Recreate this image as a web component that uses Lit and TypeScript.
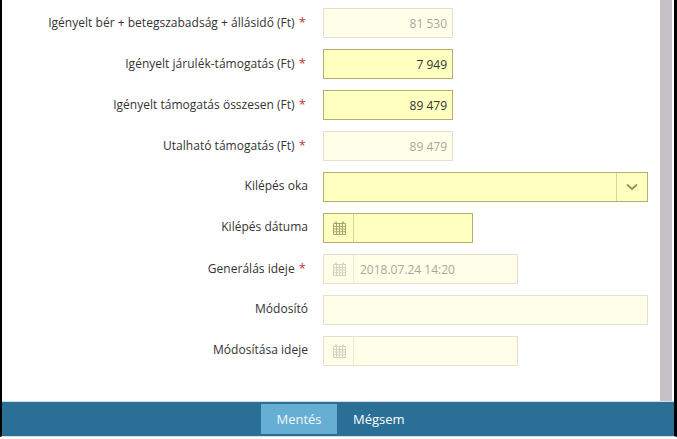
import { LitElement, html, css } from "lit";
import { customElement } from "lit/decorators.js";

const calendar = html`<svg class="cal" viewBox="0 0 13 14" width="13" height="14" aria-hidden="true">
  <path d="M.5 2.5h12v11H.5zM.5 5.5h12M.5 8h12M.5 10.75h12M3.5 2.5v11M6.5 2.5v11M9.5 2.5v11" fill="none" stroke="currentColor" stroke-width="1"/>
  <path d="M3 .5v2M10 .5v2" fill="none" stroke="currentColor" stroke-width="1.6"/>
</svg>`;

type Row = { label: string; req?: boolean; kind: "num" | "select" | "date" | "text"; value?: string; on?: boolean; w?: string };

const rows: Row[] = [
  { label: "Igényelt bér + betegszabadság + állásidő (Ft)", req: true, kind: "num", value: "81 530" },
  { label: "Igényelt járulék-támogatás (Ft)", req: true, kind: "num", value: "7 949", on: true },
  { label: "Igényelt támogatás összesen (Ft)", req: true, kind: "num", value: "89 479", on: true },
  { label: "Utalható támogatás (Ft)", req: true, kind: "num", value: "89 479" },
  { label: "Kilépés oka", kind: "select", on: true },
  { label: "Kilépés dátuma", kind: "date", on: true, w: "short" },
  { label: "Generálás ideje", req: true, kind: "date", value: "2018.07.24 14:20", w: "long" },
  { label: "Módosító", kind: "text" },
  { label: "Módosítása ideje", kind: "date", w: "long" },
];

@customElement("app-root")
export class AppRoot extends LitElement {
  static styles = css`
    :host {
      display: block;
      width: 677px;
      height: 439px;
      overflow: hidden;
      background: #fff;
      font-family: "Open Sans", sans-serif;
      font-size: 12px;
      color: #333;
    }
    .window {
      height: 437px;
      display: flex;
      flex-direction: column;
      border-left: 2px solid #000;
      border-right: 3px solid #000;
      border-bottom: 1px solid #d3dfe6;
      box-sizing: border-box;
      background: #fff;
    }
    .body {
      flex: 1;
      min-height: 0;
      display: flex;
      border-bottom: 1px solid #d3dfe6;
    }
    .form {
      flex: 1;
      padding-top: 8px;
      display: flex;
      flex-direction: column;
      gap: 11px;
    }
    .row {
      display: flex;
      height: 30px;
      gap: 15px;
    }
    .label {
      width: 306px;
      text-align: right;
      line-height: 30px;
      height: 30px;
      margin-top: -1px;
      white-space: nowrap;
      letter-spacing: 0.02px;
    }
    .req { color: #c0393b; font-size: 13px; margin-left: 1px; margin-right: 2px; }
    .field {
      box-sizing: border-box;
      height: 30px;
      display: flex;
      align-items: center;
      border: 1px solid #e3e0cc;
      background: #fffee8;
      color: #a9a99b;
    }
    .field.on {
      border-color: #b5ae72;
      background: #ffffc0;
      color: #333;
    }
    .num { width: 130px; justify-content: flex-end; padding-right: 5px; }
    .wide { width: 325px; }
    .short { width: 150px; }
    .long { width: 195px; }
    .addon {
      box-sizing: border-box;
      width: 30px;
      height: 28px;
      flex: none;
      display: flex;
      align-items: center;
      justify-content: center;
      padding-left: 1px;
      border-right: 1px solid #eeeccf;
      color: #d4d3bd;
    }
    .on .addon { border-right-color: #d8d49b; color: #a8a373; }
    .date-value { padding-left: 6px; }
    .fill { flex: 1; }
    .chevron {
      box-sizing: border-box;
      width: 31px;
      height: 28px;
      flex: none;
      display: flex;
      align-items: center;
      justify-content: center;
      border-left: 1px solid #d8d49b;
      color: #97915c;
    }
    .scroll {
      width: 12px;
      margin-right: 2px;
      background: #c4c2c6;
      flex: none;
    }
    .footer {
      flex: none;
      height: 34px;
      background: #2a6f96;
      display: flex;
      padding-left: 259px;
      box-sizing: border-box;
      align-items: center;
    }
    .btn {
      height: 30px;
      line-height: 30px;
      color: #fff;
      font-size: 13px;
      padding: 0 16px;
    }
    .primary { background: #67aed4; color: #f2f7fa; width: 76px; box-sizing: border-box; text-align: center; padding: 0; }
  `;

  private control(r: Row) {
    const on = r.on ? "on" : "";
    if (r.kind === "num") return html`<div class="field num ${on}">${r.value}</div>`;
    if (r.kind === "select")
      return html`<div class="field wide ${on}"><span class="fill"></span><span class="chevron">
        <svg width="12" height="8" viewBox="0 0 12 8" aria-hidden="true"><path d="M1 1.5l5 4.5 5-4.5" fill="none" stroke="currentColor" stroke-width="1.8"/></svg>
      </span></div>`;
    if (r.kind === "date")
      return html`<div class="field ${r.w} ${on}"><span class="addon">${calendar}</span><span class="date-value">${r.value ?? ""}</span></div>`;
    return html`<div class="field wide ${on}"></div>`;
  }

  render() {
    return html`<div class="window">
      <div class="body">
        <div class="form">
          ${rows.map(
            (r) => html`<div class="row">
              <div class="label">${r.label}${r.req ? html` <span class="req">*</span>` : ""}</div>
              ${this.control(r)}
            </div>`
          )}
        </div>
        <div class="scroll"></div>
      </div>
      <div class="footer">
        <div class="btn primary">Mentés</div>
        <div class="btn">Mégsem</div>
      </div>
    </div>`;
  }
}
